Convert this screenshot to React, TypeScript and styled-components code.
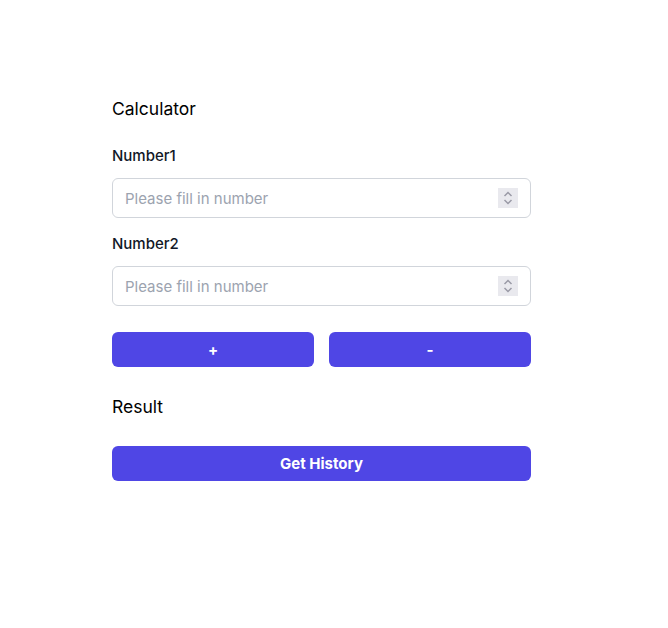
import { FC, useState } from 'react';
import { createGlobalStyle, styled } from 'styled-components';

const GlobalStyle = createGlobalStyle`
  body {
    margin: 0;
    background: #ffffff;
    font-family: Inter, "Noto Sans", sans-serif;
    color: #111827;
  }
`

const Page = styled.div`
  padding: 96px 0 0 112px;
`

const Form = styled.div`
  display: flex;
  flex-direction: column;
  width: 419px;
`

const Title = styled.h2`
  margin: 0;
  font-size: 17.5px;
  line-height: 26px;
  font-weight: 400;
  color: #000;
`

const Label = styled.label<{ $first?: boolean }>`
  display: block;
  margin-top: ${p => (p.$first ? '24px' : '16px')};
  font-size: 15px;
  line-height: 20px;
  font-weight: 500;
  color: #111827;
`

const Field = styled.div`
  position: relative;
  margin-top: 12px;
`

const Input = styled.input`
  box-sizing: border-box;
  display: block;
  width: 100%;
  height: 40px;
  padding: 0 40px 0 12px;
  border: 1px solid #d1d5db;
  border-radius: 6px;
  font-family: Inter, "Noto Sans", sans-serif;
  font-size: 15px;
  color: #111827;
  outline: none;
  -moz-appearance: textfield;
  &::-webkit-inner-spin-button,
  &::-webkit-outer-spin-button {
    -webkit-appearance: none;
    margin: 0;
  }
  &::placeholder {
    color: #9ca3af;
  }
`

const Spinner = styled.span`
  position: absolute;
  top: 10px;
  right: 13px;
  width: 20px;
  height: 20px;
  display: flex;
  align-items: center;
  justify-content: center;
  background: #e9e9ee;
  pointer-events: none;
`

const ButtonRow = styled.div`
  display: grid;
  grid-template-columns: 202px 202px;
  justify-content: space-between;
  margin-top: 26px;
`

const Button = styled.button`
  height: 35px;
  border: none;
  border-radius: 6px;
  background: #4f46e5;
  color: #fff;
  font-family: Inter, "Noto Sans", sans-serif;
  font-size: 15px;
  font-weight: 700;
  &:hover {
    cursor: pointer;
  }
`

const Result = styled.p`
  margin: 27px 0 0;
  font-size: 17.5px;
  line-height: 26px;
  color: #000;
`

const HistoryButton = styled(Button)`
  margin-top: 26px;
  width: 100%;
`

const SpinIcon: FC = () => (
    <svg width="12" height="16" viewBox="0 0 12 16" fill="none" stroke="#9a9aa6" strokeWidth="1.5">
        <path d="M2.5 6 L6 2.5 L9.5 6" />
        <path d="M2.5 10 L6 13.5 L9.5 10" />
    </svg>
)

const App: FC = () => {
    const [a, setA] = useState('')
    const [b, setB] = useState('')
    const [result, setResult] = useState<number | null>(null)

    return (
        <>
            <GlobalStyle />
            <Page>
                <Form>
                    <Title>Calculator</Title>
                    <Label $first htmlFor="n1">Number1</Label>
                    <Field>
                        <Input id="n1" type="number" placeholder="Please fill in number" value={a} onChange={e => setA(e.target.value)} />
                        <Spinner><SpinIcon /></Spinner>
                    </Field>
                    <Label htmlFor="n2">Number2</Label>
                    <Field>
                        <Input id="n2" type="number" placeholder="Please fill in number" value={b} onChange={e => setB(e.target.value)} />
                        <Spinner><SpinIcon /></Spinner>
                    </Field>
                    <ButtonRow>
                        <Button onClick={() => setResult(Number(a) + Number(b))}>+</Button>
                        <Button onClick={() => setResult(Number(a) - Number(b))}>-</Button>
                    </ButtonRow>
                    <Result>Result{result !== null ? ` ${result}` : ''}</Result>
                    <HistoryButton>Get History</HistoryButton>
                </Form>
            </Page>
        </>
    )
}

export default App
